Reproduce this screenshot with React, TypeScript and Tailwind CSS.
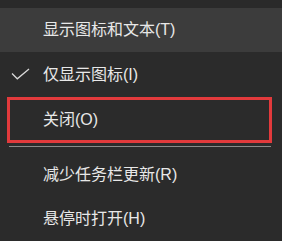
import React from 'react';

const font = { fontFamily: '"Liberation Sans", "Noto Sans CJK SC", sans-serif' };

const App: React.FC = () => {
  return (
    <div className="w-[282px] h-[241px] overflow-hidden bg-[#2b2b2b] text-[16px] text-[#e8e8e8] leading-none" style={font}>
      <div className="h-[8px] bg-[#2a2a2a]"></div>

      {/* hovered item */}
      <div className="h-[44px] bg-[#3c3c3c] flex items-center pl-[43px]">显示图标和文本(T)</div>

      {/* checked item */}
      <div className="relative h-[45px] flex items-center pl-[43px]">
        <svg className="absolute left-[10px] top-[16px]" width="22" height="14" viewBox="0 0 22 14">
          <path d="M2 5.5 L7.3 10.8 L19 1" fill="none" stroke="#d8d8d8" strokeWidth="1.3" />
        </svg>
        仅显示图标(I)
      </div>

      {/* highlighted with red box */}
      <div className="ml-[7px] w-[265px] h-[46px] border-[3px] border-[#e23a3c] flex items-center pl-[33px]">关闭(O)</div>

      <div className="mt-[3px] ml-[9px] w-[262px] h-px bg-[#8a8a8a]"></div>

      <div className="mt-[6px] h-[44px] flex items-center pl-[43px]">减少任务栏更新(R)</div>
      <div className="h-[44px] flex items-center pl-[43px]">悬停时打开(H)</div>
    </div>
  );
};

export default App;
